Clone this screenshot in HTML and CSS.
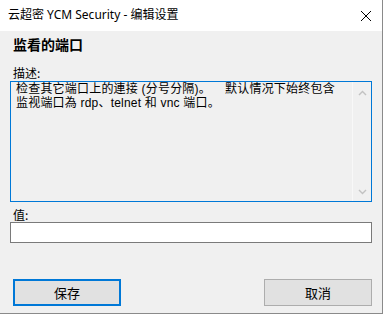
FILE: index.html
```html
<!DOCTYPE html>
<html lang="zh">
<head>
<meta charset="utf-8">
<link rel="stylesheet" href="styles.css">
</head>
<body>
<div class="window">
  <div class="titlebar">
    <span class="title">云超密 YCM Security - 编辑设置</span>
    <svg class="close" width="12" height="12" viewBox="0 0 12 12"><path d="M1 1L11 11M11 1L1 11" stroke="#000" stroke-width="1"/></svg>
  </div>
  <div class="content">
    <div class="heading">监看的端口</div>
    <div class="label label-desc">描述:</div>
    <div class="desc">
      <div class="desc-text"><div class="line">检查其它端口上的連接 (分号分隔)。&nbsp;&nbsp;&nbsp; 默认情况下始终包含</div><div class="line">监视端口為 rdp、telnet 和 vnc 端口。</div></div>
      <div class="scrollbar">
        <svg class="arrow" width="9" height="6" viewBox="0 0 9 6"><path d="M1 5L4.5 1.5L8 5" fill="none" stroke="#c2c2c2" stroke-width="1.4"/></svg>
        <svg class="arrow" width="9" height="6" viewBox="0 0 9 6"><path d="M1 1L4.5 4.5L8 1" fill="none" stroke="#c2c2c2" stroke-width="1.4"/></svg>
      </div>
    </div>
    <div class="label label-val">值:</div>
    <div class="input"></div>
    <div class="buttons">
      <div class="btn btn-default">保存</div>
      <div class="btn">取消</div>
    </div>
  </div>
</div>
</body>
</html>
```
FILE: styles.css
```css
html, body {
  margin: 0;
  padding: 0;
  background: #f0f0f0;
}
.window {
  width: 382px;
  height: 313px;
  border-right: 1px solid #8a8a8a;
  border-bottom: 1px solid #8a8a8a;
  background: #f0f0f0;
  font-family: "Noto Sans", "Noto Sans CJK SC", sans-serif;
  font-size: 12px;
  color: #000;
  display: flex;
  flex-direction: column;
}
.titlebar {
  height: 31px;
  background: #fff;
  display: flex;
  align-items: center;
  justify-content: space-between;
  padding: 0 10px 0 8px;
  flex-shrink: 0;
}
.title {
  font-size: 12px;
  line-height: 16px;
  margin-top: -1px;
}
.close {
  display: block;
  margin-top: 1px;
}
.content {
  display: flex;
  flex-direction: column;
  padding: 0 10px 0 10px;
  flex: 1;
}
.heading {
  font-family: "Noto Sans CJK SC", sans-serif;
  font-weight: bold;
  font-size: 14px;
  line-height: 16px;
  margin-top: 5px;
  padding-left: 3px;
}
.label {
  font-family: "Noto Sans CJK SC", sans-serif;
  font-size: 12px;
  line-height: 14px;
  padding-left: 3px;
}
.label-desc {
  margin-top: 14px;
}
.desc {
  margin-top: 1px;
  height: 119px;
  border: 1px solid #0078d7;
  display: flex;
}
.desc-text {
  flex: 1;
  padding: 1px 10px 0 5px;
  font-family: "Liberation Sans", "Noto Sans CJK SC", sans-serif;
  font-size: 12px;
  letter-spacing: 0.2px;
  white-space: nowrap;
}
.line {
  line-height: 13.5px;
}
.scrollbar {
  width: 18px;
  border-left: 1px solid #f8f8f8;
  display: flex;
  flex-direction: column;
  justify-content: space-between;
  align-items: center;
  padding: 8px 0 6px 0;
}
.arrow {
  display: block;
}
.label-val {
  margin-top: 6px;
}
.input {
  height: 19px;
  border: 1px solid #7a7a7a;
  background: #fff;
}
.buttons {
  display: flex;
  justify-content: space-between;
  margin-top: 36px;
  padding: 0 0 0 3px;
}
.btn {
  width: 106px;
  height: 25px;
  border: 1px solid #adadad;
  background: #e1e1e1;
  font-family: "Noto Sans CJK SC", sans-serif;
  font-size: 13px;
  display: flex;
  align-items: center;
  justify-content: center;
}
.btn-default {
  width: 104px;
  height: 23px;
  border: 2px solid #0078d7;
}
```
